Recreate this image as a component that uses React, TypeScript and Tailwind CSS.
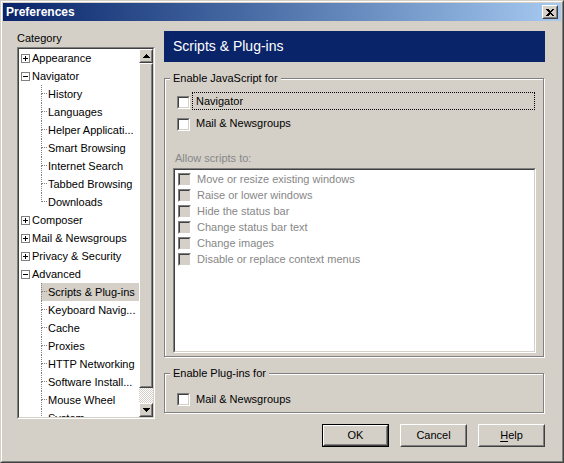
import React from 'react';

const font = "font-['Liberation_Sans',Arial,sans-serif]";

const Raised = ({ className = '', children }: { className?: string; children?: React.ReactNode }) => (
  <div className={`border border-t-white border-l-white border-r-[#404040] border-b-[#404040] ${className}`}>
    <div className="flex h-full w-full items-center justify-center border border-t-[#d4d0c8] border-l-[#d4d0c8] border-r-[#808080] border-b-[#808080] bg-[#d4d0c8]">
      {children}
    </div>
  </div>
);

const Check = ({ disabled = false }: { disabled?: boolean }) => (
  <span className="block h-[13px] w-[13px] shrink-0 border border-t-[#808080] border-l-[#808080] border-r-white border-b-white">
    <span
      className={`block h-full w-full border border-t-[#404040] border-l-[#404040] border-r-[#d4d0c8] border-b-[#d4d0c8] ${
        disabled ? 'bg-[#d4d0c8]' : 'bg-white'
      }`}
    />
  </span>
);

const Expander = ({ open }: { open: boolean }) => (
  <svg width="9" height="9" viewBox="0 0 9 9" shapeRendering="crispEdges" className="shrink-0">
    <rect x="0.5" y="0.5" width="8" height="8" fill="#fff" stroke="#808080" />
    <path d="M2 4.5h5" stroke="#000" />
    {!open && <path d="M4.5 2v5" stroke="#000" />}
  </svg>
);

const Arrow = ({ down = false }: { down?: boolean }) => (
  <svg width="7" height="4" viewBox="0 0 7 4" shapeRendering="crispEdges">
    <path d={down ? 'M0 0h7L3.5 4z' : 'M3.5 0L7 4H0z'} fill="#000" />
  </svg>
);

type Row =
  | { kind: 'top'; label: string; open: boolean }
  | { kind: 'child'; label: string; last?: boolean; selected?: boolean };

const rows: Row[] = [
  { kind: 'top', label: 'Appearance', open: false },
  { kind: 'top', label: 'Navigator', open: true },
  { kind: 'child', label: 'History' },
  { kind: 'child', label: 'Languages' },
  { kind: 'child', label: 'Helper Applicati...' },
  { kind: 'child', label: 'Smart Browsing' },
  { kind: 'child', label: 'Internet Search' },
  { kind: 'child', label: 'Tabbed Browsing' },
  { kind: 'child', label: 'Downloads', last: true },
  { kind: 'top', label: 'Composer', open: false },
  { kind: 'top', label: 'Mail & Newsgroups', open: false },
  { kind: 'top', label: 'Privacy & Security', open: false },
  { kind: 'top', label: 'Advanced', open: true },
  { kind: 'child', label: 'Scripts & Plug-ins', selected: true },
  { kind: 'child', label: 'Keyboard Navig...' },
  { kind: 'child', label: 'Cache' },
  { kind: 'child', label: 'Proxies' },
  { kind: 'child', label: 'HTTP Networking' },
  { kind: 'child', label: 'Software Install...' },
  { kind: 'child', label: 'Mouse Wheel' },
  { kind: 'child', label: 'System' },
];

const TreeRow = ({ row }: { row: Row }) => {
  if (row.kind === 'top') {
    return (
      <div className="flex h-[18px] shrink-0 items-center pl-[2px]">
        <Expander open={row.open} />
        <span className="ml-[2px] whitespace-nowrap">{row.label}</span>
      </div>
    );
  }
  return (
    <div className="flex h-[18px] shrink-0 pl-[22px]">
      <div className={`flex flex-1 items-center ${row.selected ? 'bg-[#d4d0c8]' : ''}`}>
        <div className="flex h-full w-[6px] shrink-0 flex-col">
          <div className="h-[9px] border-b border-l border-dotted border-[#808080]" />
          <div className={`flex-1 ${row.last ? '' : 'border-l border-dotted border-[#808080]'}`} />
        </div>
        <span className="ml-[1px] whitespace-nowrap">{row.label}</span>
      </div>
    </div>
  );
};

const Group = ({ title, className = '', children }: { title: string; className?: string; children: React.ReactNode }) => (
  <div
    className={`relative mr-[1px] border border-[#808080] shadow-[inset_1px_1px_0_#fff,1px_1px_0_#fff] pl-[12px] ${className}`}
  >
    <span className="absolute -top-[7px] left-[5px] bg-[#d4d0c8] px-[3px] leading-[13px]">{title}</span>
    {children}
  </div>
);

const scripts = [
  'Move or resize existing windows',
  'Raise or lower windows',
  'Hide the status bar',
  'Change status bar text',
  'Change images',
  'Disable or replace context menus',
];

const Button = ({ children, isDefault = false }: { children: React.ReactNode; isDefault?: boolean }) =>
  isDefault ? (
    <div className="h-[23px] w-[67px] border border-black">
      <Raised className="h-full w-full">{children}</Raised>
    </div>
  ) : (
    <Raised className="h-[23px] w-[67px]">{children}</Raised>
  );

export default function App() {
  return (
    <div className={`h-[463px] w-[564px] bg-[#d4d0c8] text-[11px] leading-[13px] text-black ${font}`}>
      <div className="h-full border border-t-[#d4d0c8] border-l-[#d4d0c8] border-r-[#404040] border-b-[#404040]">
        <div className="flex h-full flex-col border border-t-white border-l-white border-r-[#808080] border-b-[#808080] p-[1px]">
          {/* Title bar */}
          <div className="flex h-[18px] shrink-0 items-center justify-between bg-linear-to-r from-[#0a246a] to-[#a6caf0] pl-[3px] pr-[3px]">
            <span className="text-[12px] font-bold leading-none text-white">Preferences</span>
            <Raised className="h-[14px] w-[16px]">
              <svg width="8" height="7" viewBox="0 0 8 7" shapeRendering="crispEdges">
                <path d="M0 0h2l2 2 2-2h2L5 3.5 8 7H6L4 5 2 7H0l3-3.5z" fill="#000" />
              </svg>
            </Raised>
          </div>

          <div className="flex flex-1 pl-[14px]">
            {/* Category column */}
            <div className="flex w-[138px] shrink-0 flex-col pt-[11px]">
              <div className="h-[15px] leading-[13px]">Category</div>
              <div className="h-[372px] border border-t-[#808080] border-l-[#808080] border-r-white border-b-white">
                <div className="flex h-full border border-t-[#404040] border-l-[#404040] border-r-[#d4d0c8] border-b-[#d4d0c8] bg-white">
                  <div className="flex flex-1 flex-col overflow-hidden">
                    {rows.map((r) => (
                      <TreeRow key={r.label} row={r} />
                    ))}
                  </div>
                  <div className="flex w-[14px] shrink-0 flex-col">
                    <Raised className="h-[14px] shrink-0">
                      <Arrow />
                    </Raised>
                    <Raised className="h-[325px] shrink-0" />
                    <div className="flex-1 bg-[repeating-conic-gradient(#d4d0c8_0_25%,#ffffff_0_50%)] bg-[length:2px_2px]" />
                    <Raised className="h-[14px] shrink-0">
                      <Arrow down />
                    </Raised>
                  </div>
                </div>
              </div>
            </div>

            {/* Panel */}
            <div className="ml-[9px] flex w-[381px] shrink-0 flex-col pt-[10px]">
              <div className="flex h-[31px] items-center bg-[#0a246a] pl-[9px] text-[14px] text-white">
                Scripts &amp; Plug-ins
              </div>

              <Group title="Enable JavaScript for" className="mt-[16px] h-[279px] pt-[13px]">
                <div className="flex h-[18px] items-start">
                  <span className="mt-[4px]">
                    <Check />
                  </span>
                  <span className="ml-[2px] mr-[8px] flex h-[18px] flex-1 items-center border border-dotted border-black pl-[3px]">
                    Navigator
                  </span>
                </div>
                <div className="mt-[4px] flex h-[18px] items-start">
                  <span className="mt-[4px]">
                    <Check />
                  </span>
                  <span className="ml-[6px] flex h-[18px] items-center">Mail &amp; Newsgroups</span>
                </div>
                <div className="-ml-[2px] mt-[19px] h-[14px] leading-[14px] text-[#878787]">Allow scripts to:</div>
                <div className="-ml-[4px] mr-[7px] mt-[3px] h-[185px] border border-t-[#808080] border-l-[#808080] border-r-white border-b-white">
                  <div className="h-full border border-t-[#404040] border-l-[#404040] border-r-[#d4d0c8] border-b-[#d4d0c8] bg-white pl-[3px] pt-[1px]">
                    {scripts.map((s) => (
                      <div key={s} className="flex h-[16px] items-center">
                        <Check disabled />
                        <span className="ml-[6px] whitespace-nowrap text-[#878787]">{s}</span>
                      </div>
                    ))}
                  </div>
                </div>
              </Group>

              <Group title="Enable Plug-ins for" className="mt-[16px] h-[40px] pt-[16px]">
                <div className="flex h-[18px] items-center">
                  <Check />
                  <span className="ml-[6px]">Mail &amp; Newsgroups</span>
                </div>
              </Group>

              <div className="mt-[11px] flex justify-end gap-[11px]">
                <Button isDefault>OK</Button>
                <Button>Cancel</Button>
                <Button>
                  <span>
                    <span className="underline underline-offset-2">H</span>elp
                  </span>
                </Button>
              </div>
            </div>
          </div>
        </div>
      </div>
    </div>
  );
}
